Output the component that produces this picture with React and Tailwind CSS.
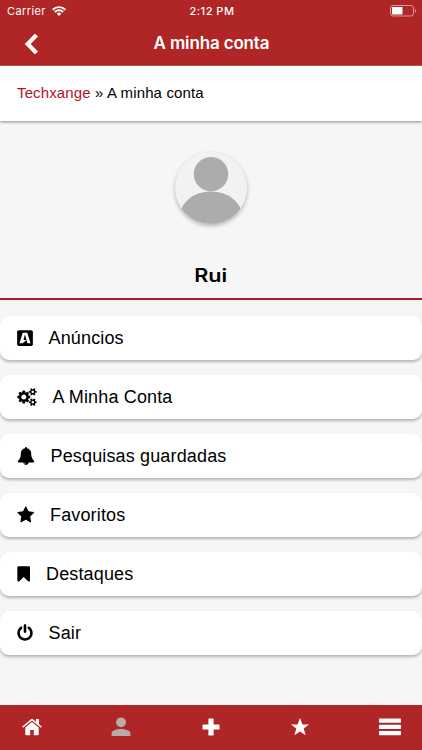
import { FaBuysellads } from "react-icons/fa";

const MENU = [
  { label: "Anúncios", icon: "ads" },
  {
    label: "A Minha Conta",
    viewBox: "-64 0 1920 1792",
    size: "w-[20px]",
    d: "M832 896q0-106-75-181t-181-75-181 75-75 181 75 181 181 75 181-75 75-181zm768 512q0-52-38-90t-90-38-90 38-38 90q0 53 37.5 90.5t90.5 37.5 90.5-37.5 37.5-90.5zm0-1024q0-52-38-90t-90-38-90 38-38 90q0 53 37.5 90.5t90.5 37.5 90.5-37.5 37.5-90.5zm-384 421v185q0 10-7 19.5t-16 10.5l-155 24q-11 35-32 76 34 48 90 115 7 11 7 20 0 12-7 19-23 30-82.5 89.5t-78.5 59.5q-11 0-21-7l-115-90q-37 19-77 31-11 108-23 155-7 24-30 24h-186q-11 0-20-7.5t-10-17.5l-23-153q-34-10-75-31l-118 89q-7 7-20 7-11 0-21-8-144-133-144-160 0-9 7-19 10-14 41-53t47-61q-23-44-35-82l-152-24q-10-1-17-9.5t-7-19.5v-185q0-10 7-19.5t16-10.5l155-24q11-35 32-76-34-48-90-115-7-11-7-20 0-12 7-20 22-30 82-89t79-59q11 0 21 7l115 90q34-18 77-32 11-108 23-154 7-24 30-24h186q11 0 20 7.5t10 17.5l23 153q34 10 75 31l118-89q8-7 20-7 11 0 21 8 144 133 144 160 0 8-7 19-12 16-42 54t-45 60q23 48 34 82l152 23q10 2 17 10.5t7 19.5zm640 533v140q0 16-149 31-12 27-30 52 51 113 51 138 0 4-4 7-122 71-124 71-8 0-46-47t-52-68q-20 2-30 2t-30-2q-14 21-52 68t-46 47q-2 0-124-71-4-3-4-7 0-25 51-138-18-25-30-52-149-15-149-31v-140q0-16 149-31 13-29 30-52-51-113-51-138 0-4 4-7 4-2 35-20t59-34 30-16q8 0 46 46.5t52 67.5q20-2 30-2t30 2q51-71 92-112l6-2q4 0 124 70 4 3 4 7 0 25-51 138 17 23 30 52 149 15 149 31zm0-1024v140q0 16-149 31-12 27-30 52 51 113 51 138 0 4-4 7-122 71-124 71-8 0-46-47t-52-68q-20 2-30 2t-30-2q-14 21-52 68t-46 47q-2 0-124-71-4-3-4-7 0-25 51-138-18-25-30-52-149-15-149-31v-140q0-16 149-31 13-29 30-52-51-113-51-138 0-4 4-7 4-2 35-20t59-34 30-16q8 0 46 46.5t52 67.5q20-2 30-2t30 2q51-71 92-112l6-2q4 0 124 70 4 3 4 7 0 25-51 138 17 23 30 52 149 15 149 31z",
  },
  {
    label: "Pesquisas guardadas",
    viewBox: "0 0 1792 1792",
    size: "w-[18px]",
    d: "M912 1696q0-16-16-16-59 0-101.5-42.5t-42.5-101.5q0-16-16-16t-16 16q0 73 51.5 124.5t124.5 51.5q16 0 16-16zm816-288q0 52-38 90t-90 38h-448q0 106-75 181t-181 75-181-75-75-181h-448q-52 0-90-38t-38-90q50-42 91-88t85-119.5 74.5-158.5 50-206 19.5-260q0-152 117-282.5t307-158.5q-8-19-8-39 0-40 28-68t68-28 68 28 28 68q0 20-8 39 190 28 307 158.5t117 282.5q0 139 19.5 260t50 206 74.5 158.5 85 119.5 91 88z",
  },
  {
    label: "Favoritos",
    viewBox: "64 0 1664 1792",
    size: "w-[17.5px]",
    d: "M1728 647q0 22-26 48l-363 354 86 500q1 7 1 20 0 21-10.5 35.5t-30.5 14.5q-19 0-40-12l-449-236-449 236q-22 12-40 12-21 0-31.5-14.5t-10.5-35.5q0-6 2-20l86-500-364-354q-25-27-25-48 0-37 56-46l502-73 225-455q19-41 49-41t49 41l225 455 502 73q56 9 56 46z",
  },
  {
    label: "Destaques",
    viewBox: "256 0 1280 1792",
    size: "w-[13.5px]",
    d: "M1420 128q23 0 44 9 33 13 52.5 41t19.5 62v1289q0 34-19.5 62t-52.5 41q-19 8-44 8-48 0-83-32l-441-424-441 424q-36 33-83 33-23 0-44-9-33-13-52.5-41t-19.5-62v-1289q0-34 19.5-62t52.5-41q21-9 44-9h1048z",
  },
  {
    label: "Sair",
    viewBox: "128 0 1536 1792",
    size: "w-[16px]",
    d: "M1664 896q0 156-61 298t-164 245-245 164-298 61-298-61-245-164-164-245-61-298q0-182 80.5-343t226.5-270q43-32 95.5-25t83.5 50q32 42 24.5 94.5t-49.5 84.5q-98 74-151.5 181t-53.5 228q0 104 40.5 198.5t109.5 163.5 163.5 109.5 198.5 40.5 198.5-40.5 163.5-109.5 109.5-163.5 40.5-198.5q0-121-53.5-228t-151.5-181q-42-32-49.5-84.5t24.5-94.5q31-43 84-50t95 25q146 109 226.5 270t80.5 343zm-640-768v640q0 52-38 90t-90 38-90-38-38-90v-640q0-52 38-90t90-38 90 38 38 90z",
  },
];

export default function App() {
  return (
    <div className="flex h-[750px] w-[422px] flex-col overflow-hidden bg-[#f6f6f6] font-['Liberation_Sans',sans-serif] text-black">
      <Header />
      <nav className="z-10 flex h-[55px] shrink-0 items-center bg-white px-[17px] text-[15px] tracking-[0.13px] shadow-[0_1px_3px_rgba(0,0,0,0.45)]">
        <a className="text-[#b01426]">Techxange</a>
        <span className="whitespace-pre"> » A minha conta</span>
      </nav>
      <Profile />
      <main className="flex flex-1 flex-col gap-[15px] pt-4">
        {MENU.map((item) => (
          <MenuRow key={item.label} item={item} />
        ))}
      </main>
      <TabBar />
    </div>
  );
}

function Header() {
  return (
    <header className="h-[66px] shrink-0 border-b border-[#c45a5a] bg-[#b02525] font-['Inter',sans-serif] text-white">
      <div className="grid h-[22px] grid-cols-3 items-center pr-[5px] pl-[7px] text-[11px]">
        <div className="flex items-center gap-[6px]">
          <span className="tracking-[0.4px]">Carrier</span>
          <Wifi />
        </div>
        <span className="text-center font-medium tracking-[0.5px]">2:12 PM</span>
        <Battery />
      </div>
      <div className="grid h-[43px] grid-cols-[60px_1fr_60px] items-center">
        <svg viewBox="0 0 14 20" className="ml-6 h-5 w-3.5" fill="none">
          <path d="M11 2.500 3.700 10l7.300 7.500" stroke="white" strokeWidth="4.200" strokeLinecap="square" strokeLinejoin="miter" />
        </svg>
        <h1 className="pl-px text-center text-[17px] font-semibold tracking-[-0.15px]">
          A minha conta
        </h1>
      </div>
    </header>
  );
}

function Wifi() {
  return (
    <svg viewBox="0 0 14 10" className="h-[10px] w-[14px]" fill="none" stroke="white" strokeWidth="1.900">
      <path d="M.7 3.700a9 9 0 0 1 12.600 0M2.900 6a5.800 5.800 0 0 1 8.200 0" />
      <path d="M7 10 4.700 7.700a3.300 3.300 0 0 1 4.600 0z" fill="white" stroke="none" />
    </svg>
  );
}

function Battery() {
  return (
    <svg viewBox="0 0 27 12" className="h-3 w-[27px] justify-self-end">
      <rect x=".5" y=".5" width="23" height="10.500" rx="2.500" fill="none" stroke="#dc9a9a" />
      <rect x="2" y="2" width="10.500" height="7.500" rx=".6" fill="white" />
      <path d="M25 4v3.500q1.300-.4 1.300-1.750T25 4z" fill="#dc9a9a" />
    </svg>
  );
}

function Profile() {
  return (
    <section className="flex h-[179px] shrink-0 flex-col items-center border-b-2 border-[#a91d2c] pt-[31px]">
      <div className="h-[72px] w-[72px] overflow-hidden rounded-full bg-[#f2f2f2] shadow-[0_2px_4px_rgba(0,0,0,0.28)]">
        <svg viewBox="0 0 72 72" className="h-full w-full" fill="#acacac">
          <circle cx="36" cy="22.200" r="17.200" />
          <ellipse cx="36" cy="64" rx="31" ry="24.500" />
        </svg>
      </div>
      <p className="mt-[38px] scale-x-[1.2] font-['Inter',sans-serif] text-[18px] leading-7 font-semibold">
        Rui
      </p>
    </section>
  );
}

function MenuRow({ item }) {
  return (
    <a className="flex h-11 shrink-0 items-center gap-4 rounded-[9px] bg-white pl-[16.5px] text-[18px] tracking-[0.15px] shadow-[0_2px_3px_rgba(0,0,0,0.27)]">
      {item.icon === "ads" ? (
        <FaBuysellads className="h-[18px] w-4" />
      ) : (
        <svg viewBox={item.viewBox} className={`h-[18px] ${item.size}`} fill="currentColor">
          <path d={item.d} />
        </svg>
      )}
      <span className="pt-px">{item.label}</span>
    </a>
  );
}

function TabBar() {
  return (
    <footer className="grid h-[45px] shrink-0 grid-cols-[64px_114px_65px_114px_65px] items-center justify-items-center bg-[#b02525] pb-px text-white">
      <svg viewBox="0 0 20 18" className="h-[18px] w-5" fill="currentColor">
        <path d="M10 3.900 3.300 9.500V16.500q0 .8.800.8h4.100V12h3.600v5.300h4.100q.8 0 .8-.8V9.500z" />
        <path d="M14 1h3v5.200l2.900 2.500-.9 1.100L10 2.500 1 9.800.1 8.700 9 1.200q1-.8 2 0l3 2.500z" />
      </svg>
      <svg viewBox="0 0 20 20" className="h-5 w-5 text-[#b9abab]" fill="currentColor">
        <circle cx="10" cy="5.300" r="4.900" />
        <path d="M.6 19v-2.500C.6 13.500 5 12 10 12s9.400 1.500 9.400 4.500V19z" />
      </svg>
      <svg viewBox="0 0 18 18" className="h-[18px] w-[18px]" fill="currentColor">
        <path d="M7 .5h4q.6 0 .6.6v5.300h5.300q.6 0 .6.6v4q0 .6-.6.6h-5.300v5.300q0 .6-.6.6H7q-.6 0-.6-.6v-5.300H1.100q-.6 0-.6-.6V7q0-.6.6-.6h5.300V1.100Q6.400.5 7 .5z" />
      </svg>
      <svg viewBox="0 0 18 18" className="h-[18px] w-[18px]" fill="currentColor">
        <path d="m9 0 2.400 6.400 6.600.1-5.300 4 1.900 6.800L9 13.400l-5.600 3.900 1.900-6.800L0 6.500l6.600-.1z" />
      </svg>
      <svg viewBox="0 0 22 18" className="h-[18px] w-[22px]" fill="currentColor">
        <rect y=".6" width="22" height="4.200" rx=".8" />
        <rect y="6.800" width="22" height="4.200" rx=".8" />
        <rect y="13" width="22" height="4.200" rx=".8" />
      </svg>
    </footer>
  );
}
